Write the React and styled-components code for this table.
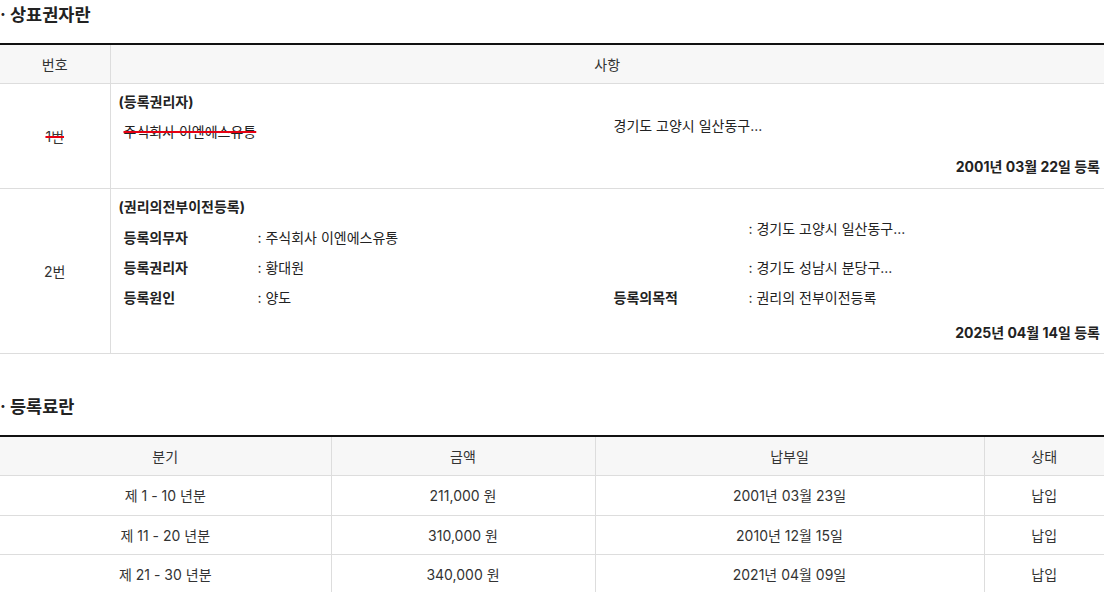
import React from "react";
import styled, { createGlobalStyle } from "styled-components";

const Global = createGlobalStyle`
  html, body { margin: 0; padding: 0; background: #fff; }
  body {
    font-family: Inter, "Noto Sans CJK KR", sans-serif;
    font-size: 14px;
    color: #222;
  }
`;

const Page = styled.div`
  width: 1104px;
`;

const SectionTitle = styled.h2`
  margin: ${(p) => (p.$first ? "0" : "38px")} 0 13px;
  font-size: 17.5px;
  line-height: 30px;
  font-weight: 700;
  color: #222;
`;

const Table = styled.table`
  width: 100%;
  border-collapse: collapse;
  table-layout: fixed;
  border-top: 2px solid #111;
`;

const Th = styled.th`
  height: 38px;
  padding: 0;
  background: #f7f7f7;
  font-weight: 400;
  font-size: 14px;
  color: #333;
  text-align: center;
  border-bottom: 1px solid #ddd;
  border-left: 1px solid #ddd;
  &:first-child { border-left: none; }
`;

const Td = styled.td`
  height: 38.5px;
  padding: 0;
  text-align: center;
  vertical-align: middle;
  font-size: 14px;
  color: #333;
  border-bottom: 1px solid #ddd;
  border-left: 1px solid #ddd;
  &:first-child { border-left: none; }
`;

const DetailCell = styled(Td)`
  height: auto;
  text-align: left;
  vertical-align: top;
  padding: 8px 4px ${(p) => p.$pb}px 8px;
`;

const Struck = styled.span`
  text-decoration: line-through;
  text-decoration-color: #e60012;
  text-decoration-thickness: 2px;
`;

const Kind = styled.div`
  font-weight: 700;
  line-height: 20px;
  color: #222;
`;

const InfoGrid = styled.div`
  display: grid;
  grid-template-columns: 134px 356px 135px 1fr;
  row-gap: 10px;
  margin: ${(p) => p.$mt}px 0 15px 5px;
  line-height: 20px;
  color: #222;
`;

const Label = styled.div`
  font-weight: 700;
  padding-top: ${(p) => p.$drop || 0}px;
`;

const Value = styled.div`
  padding-top: ${(p) => p.$drop || 0}px;
  grid-column: ${(p) => p.$col || "auto"};
`;

const RegDate = styled.div`
  text-align: right;
  font-weight: 700;
  line-height: 20px;
  color: #222;
`;

const fees = [
  { term: "제 1 - 10 년분", amount: "211,000 원", date: "2001년 03월 23일", status: "납입" },
  { term: "제 11 - 20 년분", amount: "310,000 원", date: "2010년 12월 15일", status: "납입" },
  { term: "제 21 - 30 년분", amount: "340,000 원", date: "2021년 04월 09일", status: "납입" },
];

export default function App() {
  return (
    <Page>
      <Global />
      <SectionTitle $first>· 상표권자란</SectionTitle>
      <Table>
        <colgroup>
          <col style={{ width: 110 }} />
          <col />
        </colgroup>
        <thead>
          <tr>
            <Th>번호</Th>
            <Th>사항</Th>
          </tr>
        </thead>
        <tbody>
          <tr>
            <Td>
              <Struck>1번</Struck>
            </Td>
            <DetailCell $pb={11}>
              <Kind>(등록권리자)</Kind>
              <InfoGrid $mt={4}>
                <Value $col="1 / 3" $drop={6}>
                  <Struck>주식회사 이엔에스유통</Struck>
                </Value>
                <Value $col="3 / 5">경기도 고양시 일산동구...</Value>
              </InfoGrid>
              <RegDate>2001년 03월 22일 등록</RegDate>
            </DetailCell>
          </tr>
          <tr>
            <Td>2번</Td>
            <DetailCell $pb={10}>
              <Kind>(권리의전부이전등록)</Kind>
              <InfoGrid $mt={2}>
                <Label $drop={9}>등록의무자</Label>
                <Value $drop={9}>: 주식회사 이엔에스유통</Value>
                <Label />
                <Value>: 경기도 고양시 일산동구...</Value>
                <Label>등록권리자</Label>
                <Value>: 황대원</Value>
                <Label />
                <Value>: 경기도 성남시 분당구...</Value>
                <Label>등록원인</Label>
                <Value>: 양도</Value>
                <Label>등록의목적</Label>
                <Value>: 권리의 전부이전등록</Value>
              </InfoGrid>
              <RegDate>2025년 04월 14일 등록</RegDate>
            </DetailCell>
          </tr>
        </tbody>
      </Table>

      <SectionTitle>· 등록료란</SectionTitle>
      <Table>
        <colgroup>
          <col style={{ width: 331 }} />
          <col style={{ width: 264 }} />
          <col style={{ width: 389 }} />
          <col />
        </colgroup>
        <thead>
          <tr>
            <Th>분기</Th>
            <Th>금액</Th>
            <Th>납부일</Th>
            <Th>상태</Th>
          </tr>
        </thead>
        <tbody>
          {fees.map((f) => (
            <tr key={f.term}>
              <Td>{f.term}</Td>
              <Td>{f.amount}</Td>
              <Td>{f.date}</Td>
              <Td>{f.status}</Td>
            </tr>
          ))}
        </tbody>
      </Table>
    </Page>
  );
}
